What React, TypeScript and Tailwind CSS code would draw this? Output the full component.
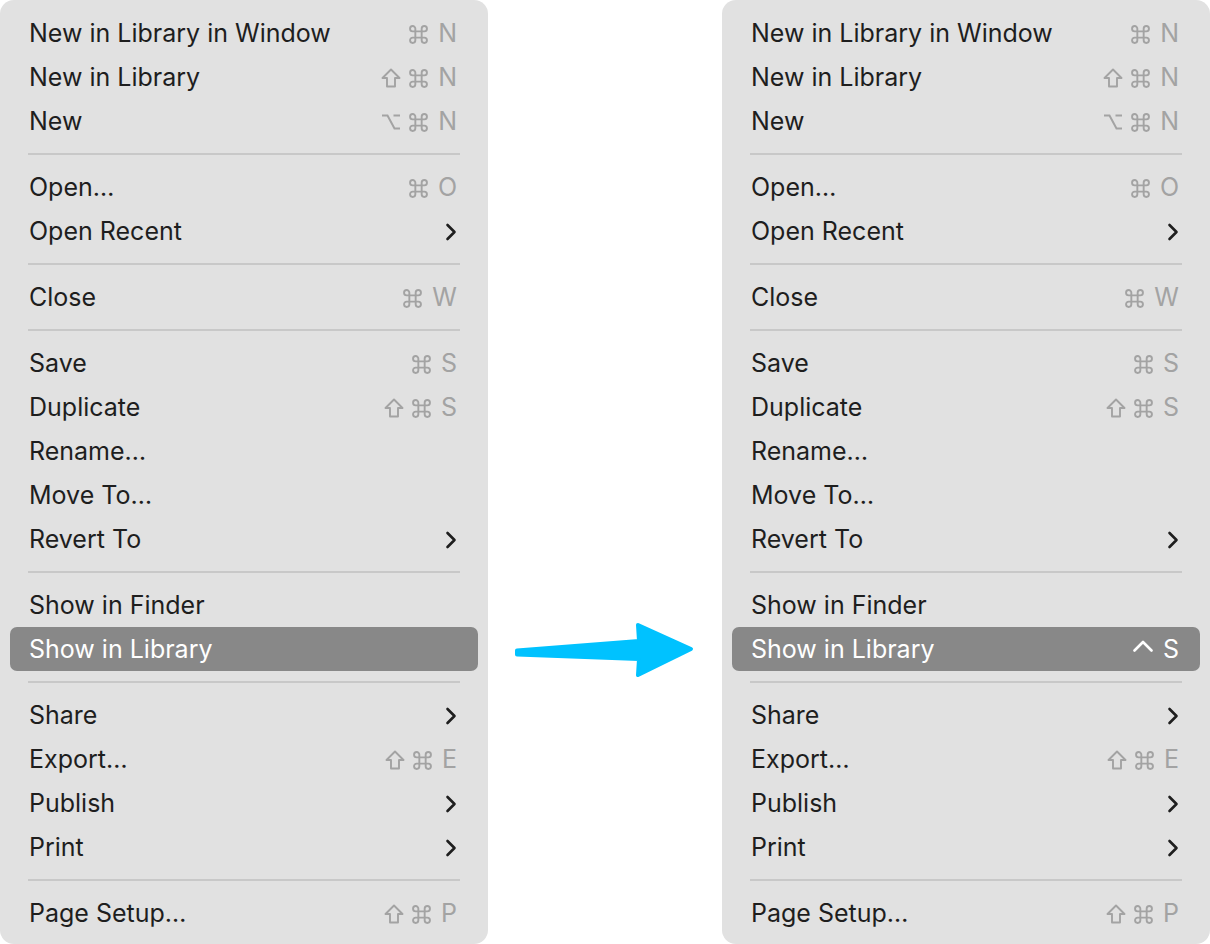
import React from "react";

type Item =
  | { kind: "sep" }
  | { kind: "item"; label: string; keys?: string; sub?: boolean; active?: boolean };

const items: Item[] = [
  { kind: "item", label: "New in Library in Window", keys: "⌘N" },
  { kind: "item", label: "New in Library", keys: "⇧⌘N" },
  { kind: "item", label: "New", keys: "⌥⌘N" },
  { kind: "sep" },
  { kind: "item", label: "Open…", keys: "⌘O" },
  { kind: "item", label: "Open Recent", sub: true },
  { kind: "sep" },
  { kind: "item", label: "Close", keys: "⌘W" },
  { kind: "sep" },
  { kind: "item", label: "Save", keys: "⌘S" },
  { kind: "item", label: "Duplicate", keys: "⇧⌘S" },
  { kind: "item", label: "Rename…" },
  { kind: "item", label: "Move To…" },
  { kind: "item", label: "Revert To", sub: true },
  { kind: "sep" },
  { kind: "item", label: "Show in Finder" },
  { kind: "item", label: "Show in Library", active: true },
  { kind: "sep" },
  { kind: "item", label: "Share", sub: true },
  { kind: "item", label: "Export…", keys: "⇧⌘E" },
  { kind: "item", label: "Publish", sub: true },
  { kind: "item", label: "Print", sub: true },
  { kind: "sep" },
  { kind: "item", label: "Page Setup…", keys: "⇧⌘P" },
];

const Chevron = () => (
  <svg width="12" height="20" viewBox="0 0 12 20" className="text-[#1e1e1e]">
    <path d="M2.5 3 L9.5 10 L2.5 17" fill="none" stroke="currentColor" strokeWidth="2.6" strokeLinecap="round" strokeLinejoin="round" />
  </svg>
);

// modifier glyphs drawn as svg so their size matches the mac menu
const Cmd = () => (
  <svg width="19" height="19" viewBox="0 0 18 18" className="mr-[10px]">
    <path
      d="M6 6 V3.5 A2.5 2.5 0 1 0 3.5 6 H14.5 A2.5 2.5 0 1 0 12 3.5 V14.5 A2.5 2.5 0 1 0 14.5 12 H3.5 A2.5 2.5 0 1 0 6 14.5 Z"
      fill="none"
      stroke="currentColor"
      strokeWidth="1.8"
    />
  </svg>
);

const Shift = () => (
  <svg width="20" height="20" viewBox="0 0 20 20" className="mr-[8px]">
    <path d="M10 1.5 L18.5 10 H14 V18.5 H6 V10 H1.5 Z" fill="none" stroke="currentColor" strokeWidth="1.9" strokeLinejoin="round" />
  </svg>
);

const Opt = () => (
  <svg width="20" height="18" viewBox="0 0 20 18" className="mr-[8px]">
    <path d="M1 2.5 H6.5 L13.5 15.5 H19 M12.5 2.5 H19" fill="none" stroke="currentColor" strokeWidth="2" />
  </svg>
);

const Ctrl = () => (
  <svg width="20" height="12" viewBox="0 0 20 12" className="mr-[10px] -mt-[9px]">
    <path d="M1.5 10.5 L10 2 L18.5 10.5" fill="none" stroke="currentColor" strokeWidth="2.6" strokeLinecap="round" strokeLinejoin="round" />
  </svg>
);

const Keys = ({ keys, white }: { keys: string; white?: boolean }) => (
  <span className={`flex items-center text-[25px] ${white ? "text-white" : "text-[#a3a3a3]"}`}>
    {Array.from(keys).map((k, i) =>
      k === "⌘" ? <Cmd key={i} /> : k === "⇧" ? <Shift key={i} /> : k === "⌥" ? <Opt key={i} /> : k === "^" ? <Ctrl key={i} /> : <span key={i}>{k}</span>
    )}
  </span>
);

const Menu = ({ showShortcut }: { showShortcut?: boolean }) => (
  <div className="w-[488px] h-[944px] bg-[#e1e1e1] rounded-[14px] pt-[11px] pb-[9px]">
    {items.map((it, i) =>
      it.kind === "sep" ? (
        <div key={i} className="h-[22px] flex items-center px-[28px]">
          <div className="h-[2px] w-full bg-[#c8c8c8]" />
        </div>
      ) : (
        <div
          key={i}
          className={`mx-[10px] h-[44px] rounded-[7px] flex items-center justify-between pl-[19px] pr-[21px] pt-[2px] text-[25px] ${
            it.active ? "bg-[#888888] text-white" : "text-[#1e1e1e]"
          }`}
        >
          <span>{it.label}</span>
          {it.keys && <Keys keys={it.keys} />}
          {it.sub && <Chevron />}
          {it.active && showShortcut && <Keys keys="^S" white />}
        </div>
      )
    )}
  </div>
);

export default function App() {
  return (
    <div
      className="w-[1210px] h-[944px] bg-white flex items-start justify-between overflow-hidden"
      style={{ fontFamily: "Inter, 'DejaVu Sans', sans-serif" }}
    >
      <Menu />
      <div className="flex-1 flex items-center justify-center mt-[620px]">
        <svg width="200" height="60" viewBox="0 0 200 60">
          <path
            d="M12 30.5 L134 21 L133 5 L186 29 L133 55 L134 39 L12 34.5 Z"
            fill="#00c2ff"
            stroke="#00c2ff"
            strokeWidth="4"
            strokeLinejoin="round"
          />
        </svg>
      </div>
      <Menu showShortcut />
    </div>
  );
}
